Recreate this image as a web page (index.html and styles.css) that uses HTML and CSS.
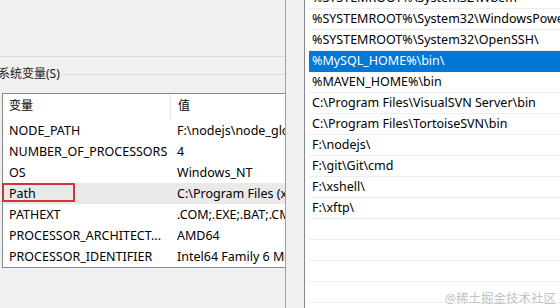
FILE: index.html
```html
<!DOCTYPE html>
<html lang="zh">
<head>
<meta charset="utf-8">
<link rel="stylesheet" href="styles.css">
</head>
<body>
<div class="left">
  <div class="top-area"></div>
  <div class="group-title"><span class="gt-text">系统变量(S)</span><span class="gt-rule"></span></div>
  <div class="table">
    <div class="row head"><div class="c1">变量</div><div class="c2">值</div></div>
    <div class="row"><div class="c1">NODE_PATH</div><div class="c2">F:\nodejs\node_global\node_modules</div></div>
    <div class="row"><div class="c1">NUMBER_OF_PROCESSORS</div><div class="c2">4</div></div>
    <div class="row"><div class="c1">OS</div><div class="c2">Windows_NT</div></div>
    <div class="row sel"><div class="c1">Path</div><div class="c2">C:\Program Files (x86)\Common Files</div><span class="mark"></span></div>
    <div class="row"><div class="c1">PATHEXT</div><div class="c2">.COM;.EXE;.BAT;.CMD;.VBS;.VBE</div></div>
    <div class="row"><div class="c1">PROCESSOR_ARCHITECT...</div><div class="c2">AMD64</div></div>
    <div class="row"><div class="c1">PROCESSOR_IDENTIFIER</div><div class="c2">Intel64 Family 6 Model 58</div></div>
  </div>
</div>
<div class="right">
  <div class="list">
    <div class="items">
      <div class="item">%SYSTEMROOT%\System32\Wbem</div>
      <div class="item">%SYSTEMROOT%\System32\WindowsPowerShell\v1.0\</div>
      <div class="item">%SYSTEMROOT%\System32\OpenSSH\</div>
      <div class="item active">%MySQL_HOME%\bin\</div>
      <div class="item">%MAVEN_HOME%\bin</div>
      <div class="item">C:\Program Files\VisualSVN Server\bin</div>
      <div class="item">C:\Program Files\TortoiseSVN\bin</div>
      <div class="item">F:\nodejs\</div>
      <div class="item">F:\git\Git\cmd</div>
      <div class="item">F:\xshell\</div>
      <div class="item">F:\xftp\</div>
      <div class="item"></div>
      <div class="item"></div>
      <div class="item"></div>
      <div class="item"></div>
    </div>
  </div>
  <div class="watermark">@稀土掘金技术社区</div>
</div>
</body>
</html>
```
FILE: styles.css
```css
html, body {
  margin: 0;
  padding: 0;
}
body {
  width: 560px;
  height: 308px;
  overflow: hidden;
  background: #f0f0f0;
  display: flex;
  font-family: "Noto Sans", "Noto Sans CJK SC", sans-serif;
  font-size: 12.5px;
  color: #000;
}
.left {
  width: 285px;
  flex: none;
  border-right: 1px solid #a0a0a0;
  overflow: hidden;
}
.top-area {
  height: 56px;
  border-bottom: 1px solid #dadada;
}
.group-title {
  margin-top: 10px;
  height: 14px;
  display: flex;
  align-items: center;
}
.gt-text {
  margin-left: -2px;
  line-height: 14px;
  font-size: 12px;
  white-space: nowrap;
  color: #1a1a1a;
}
.gt-rule {
  flex: 1;
  margin-left: 2px;
  border-top: 1px solid #dadada;
}
.table {
  margin-top: 12px;
  margin-left: 2px;
  width: 320px;
  background: #fff;
  border: 1px solid #828790;
  border-right: none;
}
.row {
  display: flex;
  height: 21px;
  line-height: 21px;
  white-space: nowrap;
  position: relative;
}
.row.head {
  height: 26px;
  line-height: 24px;
  font-size: 12px;
}
.row.head .c1 {
  border-right: 1px solid #e5e5e5;
}
.c1 {
  width: 161px;
  flex: none;
  padding-left: 6px;
  overflow: hidden;
}
.c2 {
  padding-left: 7px;
}
.row.sel {
  background: #e9e9e9;
}
.mark {
  position: absolute;
  left: -1px;
  top: 0;
  width: 69px;
  height: 15px;
  border: 2px solid #d0343a;
}
.right {
  flex: 1;
  padding-left: 18px;
  position: relative;
  overflow: hidden;
}
.list {
  height: 100%;
  background: #fff;
  border-left: 1px solid #828790;
  padding-left: 4px;
  overflow: hidden;
}
.items {
  margin-top: -12px;
}
.item {
  height: 20px;
  line-height: 20px;
  border-bottom: 1px solid #ededed;
  padding-left: 3px;
  white-space: nowrap;
  overflow: hidden;
}
.item.active {
  background: #0078d7;
  color: #fff;
  border-bottom-color: #0078d7;
}
.watermark {
  position: absolute;
  right: 4px;
  bottom: 1px;
  font-size: 12.5px;
  color: #c4c4c4;
  white-space: nowrap;
}
```
